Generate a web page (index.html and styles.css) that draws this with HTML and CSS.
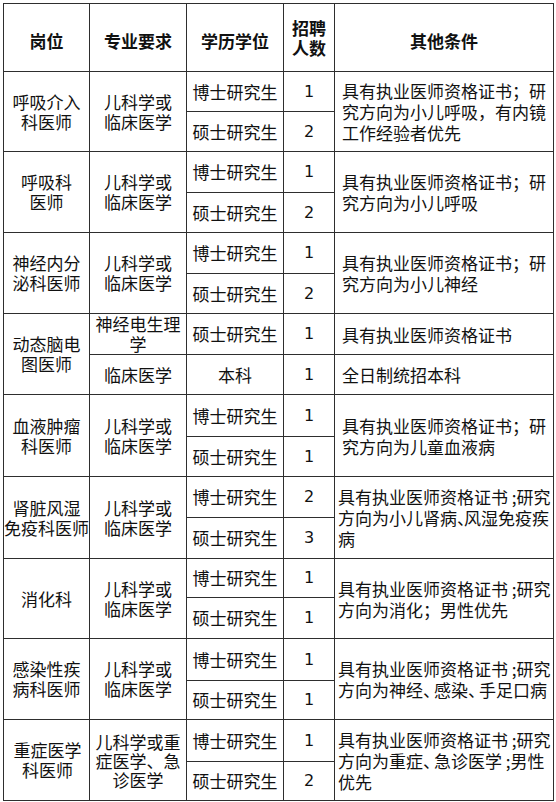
FILE: index.html
```html
<!DOCTYPE html>
<html lang="zh-CN">
<head>
<meta charset="utf-8">
<title>招聘岗位</title>
<link rel="stylesheet" href="styles.css">
</head>
<body>
<div class="sheet">
  <div class="c head low">岗位</div>
  <div class="c head low">专业要求</div>
  <div class="c head low">学历学位</div>
  <div class="c head">招聘<br>人数</div>
  <div class="c head low">其他条件</div>

  <div class="c span2">呼吸介入<br>科医师</div>
  <div class="c span2">儿科学或<br>临床医学</div>
  <div class="c">博士研究生</div>
  <div class="c num">1</div>
  <div class="c note span2"><div>具有执业医师资格证书；研<br>究方向为小儿呼吸，有内镜<br>工作经验者优先</div></div>
  <div class="c">硕士研究生</div>
  <div class="c num">2</div>

  <div class="c span2">呼吸科<br>医师</div>
  <div class="c span2">儿科学或<br>临床医学</div>
  <div class="c">博士研究生</div>
  <div class="c num">1</div>
  <div class="c note span2"><div>具有执业医师资格证书；研<br>究方向为小儿呼吸</div></div>
  <div class="c">硕士研究生</div>
  <div class="c num">2</div>

  <div class="c span2">神经内分<br>泌科医师</div>
  <div class="c span2">儿科学或<br>临床医学</div>
  <div class="c">博士研究生</div>
  <div class="c num">1</div>
  <div class="c note span2"><div>具有执业医师资格证书；研<br>究方向为小儿神经</div></div>
  <div class="c">硕士研究生</div>
  <div class="c num">2</div>

  <div class="c span2">动态脑电<br>图医师</div>
  <div class="c">神经电生理<br>学</div>
  <div class="c">硕士研究生</div>
  <div class="c num">1</div>
  <div class="c note"><div>具有执业医师资格证书</div></div>
  <div class="c">临床医学</div>
  <div class="c">本科</div>
  <div class="c num">1</div>
  <div class="c note"><div>全日制统招本科</div></div>

  <div class="c span2">血液肿瘤<br>科医师</div>
  <div class="c span2">儿科学或<br>临床医学</div>
  <div class="c">博士研究生</div>
  <div class="c num">1</div>
  <div class="c note span2"><div>具有执业医师资格证书；研<br>究方向为儿童血液病</div></div>
  <div class="c">硕士研究生</div>
  <div class="c num">1</div>

  <div class="c span2">肾脏风湿<br>免疫科医师</div>
  <div class="c span2">儿科学或<br>临床医学</div>
  <div class="c">博士研究生</div>
  <div class="c num">2</div>
  <div class="c note tight span2"><div>具有执业医师资格证书 ;研究<br>方向为小儿肾病<span class="half">、</span>风湿免疫疾<br>病</div></div>
  <div class="c">硕士研究生</div>
  <div class="c num">3</div>

  <div class="c span2">消化科</div>
  <div class="c span2">儿科学或<br>临床医学</div>
  <div class="c">博士研究生</div>
  <div class="c num">1</div>
  <div class="c note tight span2"><div>具有执业医师资格证书 ;研究<br>方向为消化；男性优先</div></div>
  <div class="c">硕士研究生</div>
  <div class="c num">1</div>

  <div class="c span2">感染性疾<br>病科医师</div>
  <div class="c span2">儿科学或<br>临床医学</div>
  <div class="c">博士研究生</div>
  <div class="c num">1</div>
  <div class="c note tight span2"><div>具有执业医师资格证书 ;研究<br>方向为神经<span class="mid">、</span>感染<span class="mid">、</span>手足口病</div></div>
  <div class="c">硕士研究生</div>
  <div class="c num">1</div>

  <div class="c span2 shift">重症医学<br>科医师</div>
  <div class="c span2 narrow">儿科学或重<br>症医学、急<br>诊医学</div>
  <div class="c">博士研究生</div>
  <div class="c num">1</div>
  <div class="c note tight span2"><div>具有执业医师资格证书 ;研究<br>方向为重症<span class="mid">、</span>急诊医学 ;男性<br>优先</div></div>
  <div class="c">硕士研究生</div>
  <div class="c num">2</div>
</div>
</body>
</html>
```

FILE: styles.css
```css
html, body {
  margin: 0;
  padding: 0;
  background: #ffffff;
}

body {
  padding: 3px;
  font-family: "Noto Sans CJK SC", "Noto Sans", sans-serif;
  font-size: 17px;
  line-height: 20px;
  color: #111111;
}

.sheet {
  display: grid;
  width: 549px;
  grid-template-columns: 85px 96px 96px 50px 218px;
  grid-template-rows: 67px 39px 39px 40px 39px 40px 39px 40px 39px 41px 39px 40px 40px 38px 40px 41px 38px 41px 38px;
  gap: 1px;
  padding: 1px;
  background: #2e2e2e;
}

.c {
  background: #ffffff;
  display: flex;
  align-items: center;
  justify-content: center;
  text-align: center;
  white-space: nowrap;
}

.span2 {
  grid-row: span 2;
}

.head {
  font-weight: bold;
}

.head.low {
  padding-top: 6px;
}

.num {
  font-family: "DejaVu Sans", sans-serif;
  font-size: 16px;
}

.note {
  justify-content: flex-start;
  text-align: left;
  padding-left: 7px;
  line-height: 21px;
}

.note.tight {
  padding-left: 3px;
}

.narrow {
  line-height: 19px;
}

.shift {
  padding-left: 2px;
}

.half {
  letter-spacing: -10px;
}

.mid {
  letter-spacing: -6px;
}
```
